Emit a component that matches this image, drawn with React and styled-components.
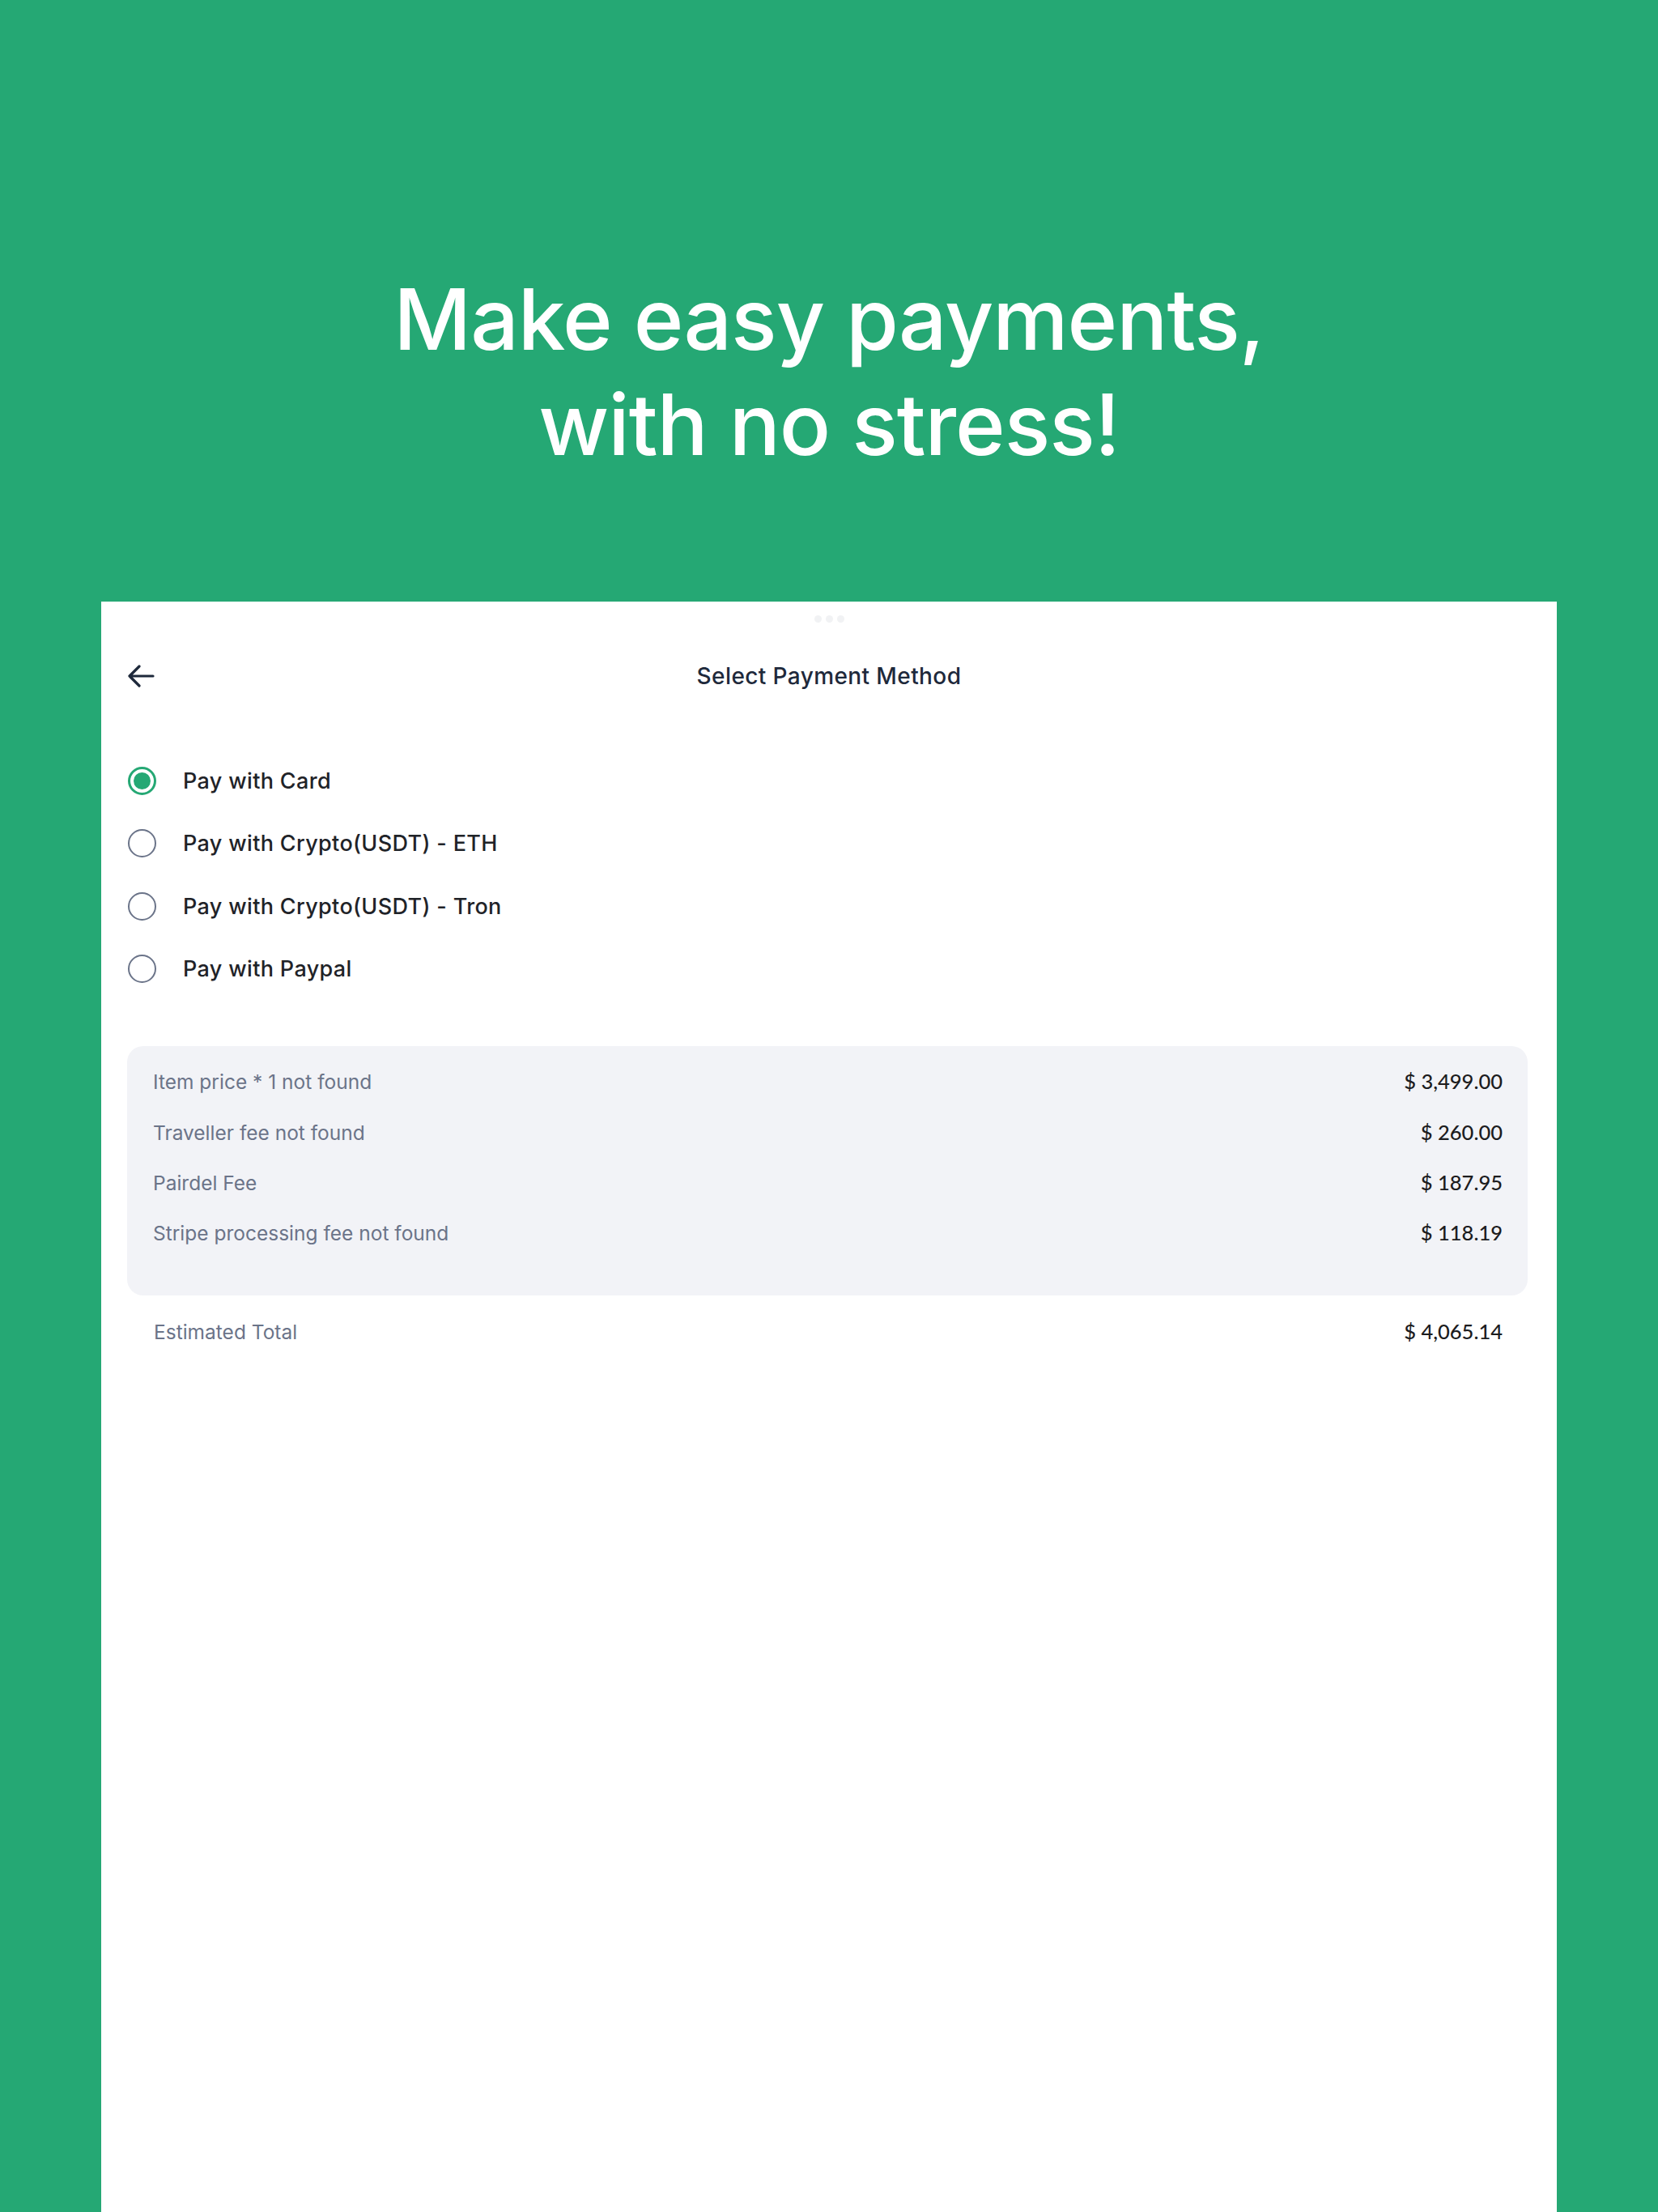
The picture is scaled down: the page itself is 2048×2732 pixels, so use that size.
import React, { useState } from "react";
import styled, { createGlobalStyle } from "styled-components";

const GlobalStyle = createGlobalStyle`
  html, body {
    margin: 0;
    padding: 0;
    background: #25a874;
  }
  body {
    font-family: Inter, "Noto Sans", sans-serif;
    -webkit-font-smoothing: antialiased;
  }
  * { box-sizing: border-box; }
`;

const Page = styled.div`
  min-height: 100vh;
  background: #25a874;
  display: flex;
  flex-direction: column;
`;

const Hero = styled.header`
  height: 743px;
  padding-top: 329px;
  text-align: center;
`;

const Headline = styled.h1`
  margin: 0;
  font-family: Inter, "Noto Sans", sans-serif;
  font-weight: 500;
  font-size: 105px;
  line-height: 130px;
  letter-spacing: -1px;
  color: #ffffff;
`;

const Sheet = styled.main`
  flex: 1;
  width: 1798px;
  margin: 0 auto;
  background: #ffffff;
  padding: 0 32px 80px;
  display: flex;
  flex-direction: column;
`;

const Grabber = styled.div`
  height: 42px;
  display: flex;
  align-items: center;
  justify-content: center;
  gap: 5px;
`;

const GrabDot = styled.span`
  width: 9px;
  height: 9px;
  border-radius: 50%;
  background: #f1f2f4;
`;

const TopBar = styled.div`
  margin-top: 20px;
  height: 60px;
  display: grid;
  grid-template-columns: 1fr auto 1fr;
  align-items: center;
`;

const BackButton = styled.button`
  justify-self: start;
  border: 0;
  background: none;
  padding: 0;
  width: 34px;
  height: 30px;
  display: flex;
  align-items: center;
  color: #1e293b;
  cursor: pointer;
`;

const Title = styled.h2`
  margin: 0;
  font-size: 28px;
  font-weight: 500;
  color: #1e293b;
  letter-spacing: 0.4px;
`;

const Methods = styled.ul`
  list-style: none;
  margin: 61px 0 0;
  padding: 0;
  display: flex;
  flex-direction: column;
`;

const Method = styled.li`
  height: 77.33px;
  display: flex;
  align-items: center;
  gap: 33px;
  padding-left: 1px;
  cursor: pointer;
`;

const Radio = styled.span`
  flex: none;
  width: 35px;
  height: 35px;
  border-radius: 50%;
  border: ${(p) => (p.$checked ? "3px solid #25a874" : "2.5px solid #6b7489")};
  display: flex;
  align-items: center;
  justify-content: center;
  &::after {
    content: "";
    width: 21px;
    height: 21px;
    border-radius: 50%;
    background: ${(p) => (p.$checked ? "#25a874" : "transparent")};
  }
`;

const MethodLabel = styled.span`
  font-size: 27px;
  font-weight: 500;
  color: #1f2328;
  letter-spacing: 0.35px;
`;

const Summary = styled.section`
  margin: 57px 4px 0 0;
  background: #f2f3f7;
  border-radius: 20px;
  padding: 13px 31px 46px 32px;
`;

const Line = styled.div`
  display: flex;
  justify-content: space-between;
  align-items: baseline;
  line-height: 61.2px;
  padding: ${(p) => (p.$total ? "0 35px 0 33px" : "0")};
  margin-top: ${(p) => (p.$total ? "14px" : "0")};
`;

const LineLabel = styled.span`
  font-size: 24.5px;
  font-weight: 400;
  color: #6b7489;
`;

const LineValue = styled.span`
  font-family: Lato, Inter, sans-serif;
  font-size: 25.5px;
  font-weight: 500;
  color: #1c1c1e;
`;

const BackArrow = () => (
  <svg width="34" height="28" viewBox="0 0 34 28" fill="none">
    <path
      d="M32 14H3M15 2L3 14l12 12"
      stroke="currentColor"
      strokeWidth="3.2"
      strokeLinecap="round"
      strokeLinejoin="round"
    />
  </svg>
);

const methods = [
  "Pay with Card",
  "Pay with Crypto(USDT) - ETH",
  "Pay with Crypto(USDT) - Tron",
  "Pay with Paypal",
];

const fees = [
  ["Item price * 1 not found", "$ 3,499.00"],
  ["Traveller fee not found", "$ 260.00"],
  ["Pairdel Fee", "$ 187.95"],
  ["Stripe processing fee not found", "$ 118.19"],
];

export default function App() {
  const [selected, setSelected] = useState(0);

  return (
    <Page>
      <GlobalStyle />
      <Hero>
        <Headline>
          Make easy payments,
          <br />
          with no stress!
        </Headline>
      </Hero>

      <Sheet>
        <Grabber>
          <GrabDot />
          <GrabDot />
          <GrabDot />
        </Grabber>

        <TopBar>
          <BackButton aria-label="Back">
            <BackArrow />
          </BackButton>
          <Title>Select Payment Method</Title>
          <span />
        </TopBar>

        <Methods>
          {methods.map((m, i) => (
            <Method key={m} onClick={() => setSelected(i)}>
              <Radio $checked={selected === i} />
              <MethodLabel>{m}</MethodLabel>
            </Method>
          ))}
        </Methods>

        <Summary>
          {fees.map(([label, value]) => (
            <Line key={label}>
              <LineLabel>{label}</LineLabel>
              <LineValue>{value}</LineValue>
            </Line>
          ))}
        </Summary>

        <Line $total>
          <LineLabel>Estimated Total</LineLabel>
          <LineValue>$ 4,065.14</LineValue>
        </Line>
      </Sheet>
    </Page>
  );
}
